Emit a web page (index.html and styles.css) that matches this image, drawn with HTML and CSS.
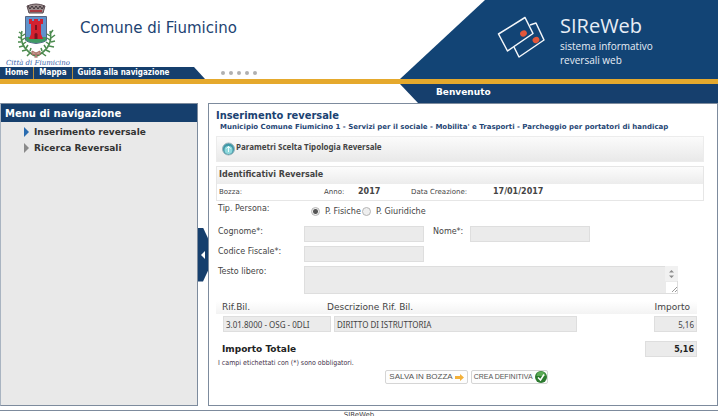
FILE: index.html
```html
<!DOCTYPE html>
<html lang="it">
<head>
<meta charset="utf-8">
<title>SIReWeb - Comune di Fiumicino</title>
<link rel="stylesheet" href="styles.css">
</head>
<body>
<div class="page">
  <header class="header">
    <div class="header-left">
      <div class="brand">
        <div class="crest">
          <svg width="48" height="56" viewBox="0 0 48 56" aria-hidden="true">
            <path d="M9 3Q18-1 27 3L25 10H11Z" fill="#9a8c8c" stroke="#5c4a50"/>
            <path d="M10 3l2 3 2-3 2 3 2-3 2 3 2-3 2 3 2-3" fill="none" stroke="#3c3338"/>
            <path d="M12 8h12" stroke="#a83a42" stroke-width="2"/>
            <path d="M7.500 13.500h21V37Q28 39 18 40.500Q8 39 7.500 37Z" fill="#5f92cc" stroke="#566581"/>
            <path d="M8 34h20v3q-1 2-10 3q-9-1-10-3z" fill="#3f9a63"/>
            <path d="M11 16h3v2h2v-2h4v2h2v-2h3v5h-2v10l2 5H11l2-5V21h-2z" fill="#d3202f"/>
            <path d="M16.500 36v-5q1.500-2 3 0v5zM17 22h2v5h-2z" fill="#7a1220"/>
            <g fill="none" stroke="#4b8a4e" stroke-width="1.500">
              <path d="M4 28Q0 44 17 53M32 28Q36 44 19 53"/>
              <path d="M4 31l-3-2M3 35l-3-1M3 39l-3 0M5 43l-4 1M8 47l-4 1M12 50l-3 3M4 33l3-2M4 37l3-2M5 41l3-2M8 45l2-3M12 48l1-3"/>
              <path d="M32 31l3-4M33 35l4-3M33 39l4-1M31 43l5 1M28 47l4 2M24 50l4 3M32 33l-3-2M32 37l-3-2M31 41l-3-2M28 45l-2-3M24 48l-1-3"/>
            </g>
            <path d="M14 48l4 2 4-2v4l-4-1-4 1zM18 51l-1 4M18 51l1 4" fill="#c79a8f" stroke="#a56a62"/>
          </svg>
          <span class="crest-name">Città di Fiumicino</span>
        </div>
        <div class="brand-title">Comune di Fiumicino</div>
      </div>
      <div class="nav-row">
        <nav class="nav">
          <a href="#home">Home</a>
          <a href="#mappa">Mappa</a>
          <a href="#guida">Guida alla navigazione</a>
        </nav>
        <div class="dots"><i></i><i></i><i></i><i></i><i></i></div>
      </div>
    </div>
    <div class="banner">
      <svg class="logo" width="50" height="43" viewBox="0 0 50 43" aria-hidden="true">
        <path d="M17 31l5 10 25-17-8-17-6 2" fill="none" stroke="#f4f7fa" stroke-width="1.500" stroke-linejoin="round"/>
        <path d="M1.500 18L28 1.500l8 16L10.500 35z" fill="#124475" stroke="#f4f7fa" stroke-width="1.500" stroke-linejoin="round"/>
        <ellipse cx="26.500" cy="17.500" rx="3.500" ry="3" transform="rotate(-35 26.500 17.500)" fill="#e2573a"/>
        <ellipse cx="39" cy="24" rx="3.500" ry="3" transform="rotate(-35 39 24)" fill="#e2573a"/>
      </svg>
      <div class="product">
        <div class="product-name">SIReWeb</div>
        <div class="product-line">sistema informativo</div>
        <div class="product-line">reversali web</div>
      </div>
    </div>
  </header>
  <div class="rule"></div>
  <div class="welcome">Benvenuto</div>

  <div class="columns">
    <aside class="sidebar">
      <h2>Menu di navigazione</h2>
      <ul>
        <li class="active"><a href="#inserimento">Inserimento reversale</a></li>
        <li><a href="#ricerca">Ricerca Reversali</a></li>
      </ul>
    </aside>
    <button class="toggle" type="button" aria-label="Chiudi menu"><i></i></button>
    <main class="main">
      <h1>Inserimento reversale</h1>
      <p class="subtitle">Municipio Comune Fiumicino 1 - Servizi per il sociale - Mobilita' e Trasporti - Parcheggio per portatori di handicap</p>

      <section class="params">
        <svg width="13" height="14" viewBox="0 0 13 14" aria-hidden="true">
          <circle cx="6.500" cy="7" r="6" fill="#3f98a8" stroke="#9bb4bb"/>
          <circle cx="6.500" cy="8" r="4" fill="#8fd8dc"/>
          <path d="M6.500 4v6M4.500 6.500l2-2 2 2" fill="none" stroke="#e9fbfb"/>
        </svg>
        <h2>Parametri Scelta Tipologia Reversale</h2>
      </section>

      <section class="ident">
        <h2>Identificativi Reversale</h2>
        <div class="ident-row">
          <span>Bozza:</span>
          <span>Anno:</span><b>2017</b>
          <span>Data Creazione:</span><b>17/01/2017</b>
        </div>
      </section>

      <form class="form">
        <div class="fields">
          <span class="label">Tip. Persona:</span>
          <div class="radios">
            <label><input type="radio" name="tipo" checked>P. Fisiche</label>
            <label><input type="radio" name="tipo">P. Giuridiche</label>
          </div>
          <label for="cognome">Cognome*:</label>
          <input id="cognome" type="text">
          <label class="second" for="nome">Nome*:</label>
          <input id="nome" type="text">
          <label class="start" for="cf">Codice Fiscale*:</label>
          <input id="cf" type="text">
          <label class="start" for="testo">Testo libero:</label>
          <div class="area">
            <textarea id="testo"></textarea>
            <svg class="area-bar" width="13" height="28" viewBox="0 0 13 28" aria-hidden="true">
              <path d="M0 0h13v15H0z" fill="#f1f1f1"/>
              <path d="M4 6.500L6.500 4 9 6.500zM4 9.500L6.500 12 9 9.500z" fill="#8b8b8b"/>
              <path d="M1 16h11v11H1z" fill="#fff"/>
              <path d="M7 26l5-5M10 26l2-2" stroke="#999"/>
            </svg>
          </div>
        </div>

        <table class="items">
          <colgroup><col class="c1"><col class="c2"><col><col class="c4"></colgroup>
          <thead>
            <tr><th>Rif.Bil.</th><th colspan="2">Descrizione Rif. Bil.</th><th class="num">Importo</th></tr>
          </thead>
          <tbody>
            <tr>
              <td class="ref" colspan="2"><input type="text" aria-label="Rif.Bil." value="3.01.8000 - OSG - 0DLI" readonly></td>
              <td class="desc"><input type="text" aria-label="Descrizione Rif. Bil." value="DIRITTO DI ISTRUTTORIA" readonly></td>
              <td class="num amount"><input type="text" aria-label="Importo" value="5,16" readonly></td>
            </tr>
          </tbody>
        </table>

        <div class="total">
          <label for="totale">Importo Totale</label>
          <input id="totale" type="text" value="5,16" readonly>
        </div>
        <p class="note">I campi etichettati con (*) sono obbligatori.</p>
        <div class="actions">
          <button class="save" type="button">SALVA IN BOZZA
            <svg width="9" height="7" viewBox="0 0 9 7" aria-hidden="true"><path d="M0 2h5V0l4 3.500L5 7V5H0z" fill="#f3b13b"/></svg>
          </button>
          <button class="create" type="button">CREA DEFINITIVA
            <svg width="12" height="12" viewBox="0 0 12 12" aria-hidden="true"><circle cx="6" cy="6" r="6" fill="#2c7a2f"/><path d="M1.500 5a4.500 4.500 0 0 1 9 0z" fill="#5bab55"/><path d="M3 6.500l2.500 2.500L9 3.500" fill="none" stroke="#fff" stroke-width="1.500"/></svg>
          </button>
        </div>
      </form>
    </main>
  </div>
  <footer class="footer">SIReWeb</footer>
</div>
</body>
</html>
```
FILE: styles.css
```css
* { box-sizing: border-box; }

html { height: 100%; overflow: hidden; }

body {
  margin: 0;
  background: #fff;
  color: #444;
  font: 8px/12px "DejaVu Sans", Verdana, sans-serif;
}

h1, h2, p, ul { margin: 0; padding: 0; }
ul { list-style: none; }
a { color: inherit; text-decoration: none; }
input, textarea, button { font: inherit; color: inherit; margin: 0; }

.page { margin-right: 2px; }

/* Header */
.header { display: flex; justify-content: space-between; }
.header-left { display: flex; flex-direction: column; flex: 1; }
.brand { display: flex; flex: 1; }

.crest {
  display: flex;
  flex-direction: column;
  width: 80px;
  padding: 3px 0 0 6px;
}
.crest svg { margin-left: 12px; }
.crest-name {
  color: #3a63a8;
  font: italic 7px/8px "DejaVu Serif", serif;
  white-space: nowrap;
}
.brand-title { padding-top: 18px; color: #1d4372; font-size: 15px; line-height: 20px; }

.nav-row { display: flex; gap: 16px; }
.nav {
  display: flex;
  width: 205px;
  background: #163f6d;
  color: #fff;
  font: bold 8px/12px "DejaVu Sans Condensed", "DejaVu Sans", sans-serif;
  clip-path: polygon(0 0, 194px 0, 100% 100%, 0 100%);
}
.nav a { padding: 0 5px; }
.nav a + a { border-left: 1px solid #b58d3c; }
.dots { display: flex; align-items: center; gap: 4px; }
.dots i { width: 4px; height: 4px; border-radius: 50%; background: #b0b0b0; }

.banner {
  display: flex;
  width: 318px;
  height: 79px;
  padding: 13px 0 0 97px;
  background: #124475;
  color: #e8eef5;
  font-family: "Open Sans", "Noto Sans", sans-serif;
  clip-path: polygon(85px 0, 100% 0, 100% 100%, 0 100%);
}
.logo { margin-top: 3px; }
.product { padding-left: 13px; }
.product-name { font-size: 20px; line-height: 26px; }
.product-line { font-size: 10px; line-height: 14px; }

.rule { height: 5px; background: #e5a92d; }
.welcome {
  width: 318px;
  height: 19px;
  margin-left: auto;
  padding: 2px 0 0 36px;
  background: #163f6d;
  color: #fff;
  font: bold 9px/12px "DejaVu Sans", sans-serif;
  clip-path: polygon(0 0, 100% 0, 100% 100%, 18px 100%);
}

/* Body columns */
.columns { display: grid; grid-template-columns: 198px 10px 1fr; }

.sidebar { border: 1px solid #7d8b9d; border-left-color: #a9b4c1; background: #e9e9e9; color: #333; }
.sidebar h2 {
  padding: 2px 4px 0;
  background: #163f6d;
  color: #fff;
  font-size: 10px;
  line-height: 16px;
}
.sidebar ul { padding-top: 2px; }
.sidebar li {
  display: flex;
  align-items: center;
  gap: 5px;
  padding-left: 23px;
  font: bold 9px/16px "DejaVu Sans", sans-serif;
}
.sidebar li::before {
  content: "";
  border: solid transparent;
  border-width: 5px 0 5px 5px;
  border-left-color: #8a8a8a;
}
.sidebar .active::before { border-left-color: #2a6cb0; }

.toggle {
  align-self: center;
  height: 54px;
  padding: 0 0 0 3px;
  border: 0;
  background: #163f6d;
  clip-path: polygon(0 0, 50% 0, 100% 20%, 100% 80%, 50% 100%, 0 100%);
}
.toggle i {
  display: block;
  width: 0;
  border: solid transparent;
  border-width: 4px 4px 4px 0;
  border-right-color: #fff;
}

.main { padding: 6px 13px 21px 7px; border: 1px solid #7d8b9d; }
.main h1 {
  color: #1a4272;
  font: bold 11px/12px "DejaVu Sans Condensed", "DejaVu Sans", sans-serif;
}
.subtitle { padding-left: 4px; color: #1f4675; font-size: 7px; font-weight: bold; line-height: 10px; }

.params {
  display: flex;
  gap: 1px;
  margin-top: 4px;
  padding: 5px;
  border: 1px solid #ececec;
  background: linear-gradient(#fbfbfb, #e9e9e9);
}
.params h2 { font: bold 8px/10px "Noto Sans", sans-serif; }

.ident { margin-top: 4px; border: 1px solid #e6e6e6; }
.ident h2 {
  padding: 0 2px 2px;
  background: linear-gradient(#fcfcfc, #ececec);
  font-size: 8px;
  line-height: 15px;
}
.ident-row {
  display: grid;
  grid-template-columns: 105px 34px 53px 82px 1fr;
  padding: 0 2px;
  font-size: 7px;
  line-height: 16px;
}
.ident-row b { font-size: 8px; }

/* Form */
.fields {
  display: grid;
  grid-template-columns: 88px 120px 46px 120px 1fr;
  row-gap: 4px;
  padding-top: 2px;
}
.fields > label, .label { padding-left: 2px; }
.fields > .second { padding-left: 9px; }
.fields > .start { grid-column-start: 1; }
.radios { display: flex; grid-column: 2 / -1; gap: 1px; padding: 2px 0 5px 7px; }
.radios label {
  display: flex;
  align-items: center;
  gap: 5px;
  font: 9px/12px "DejaVu Sans Condensed", "DejaVu Sans", sans-serif;
}
.radios input {
  appearance: none;
  width: 9px;
  height: 9px;
  border: 1px solid #b5b5b5;
  border-radius: 50%;
  background: #efefef;
}
.radios input:checked { background: radial-gradient(#555 2px, #efefef 3px); }

input[type="text"], textarea {
  width: 100%;
  height: 16px;
  padding: 0 2px;
  border: 1px solid #dedede;
  border-radius: 0;
  background: #ebebeb;
}
.area { position: relative; grid-column: 2 / -1; margin-right: 26px; }
.area textarea { display: block; height: 28px; resize: none; overflow: hidden; }
.area-bar { position: absolute; top: 0; right: 0; }

.items {
  width: calc(100% - 7px);
  margin-top: 7px;
  border-collapse: collapse;
  table-layout: fixed;
}
.items .c1 { width: 111px; }
.items .c2 { width: 7px; }
.items .c4 { width: 60px; }
.items th {
  padding: 0;
  font-size: 9px;
  font-weight: normal;
  line-height: 13px;
  text-align: left;
}
.items thead { background: linear-gradient(#fff, #f3f3f3); }
.items th:first-child { padding-left: 6px; }
.items .num { text-align: right; }
.items th.num { padding-right: 7px; }
.items td { padding: 2px 0 0; }
.items td input { font: 8px/12px "Noto Sans", sans-serif; }
.items .ref { padding-left: 7px; padding-right: 3px; }
.items .desc input { width: 243px; }
.items .amount input { width: 43px; text-align: right; }

.total {
  display: flex;
  align-items: center;
  justify-content: space-between;
  margin: 9px 7px 0 6px;
  color: #222;
  font-size: 9px;
  font-weight: bold;
}
.total input { width: 52px; font-size: 8px; text-align: right; }
.note {
  padding-left: 2px;
  color: #43304a;
  font: 7px/12px "DejaVu Sans Condensed", "DejaVu Sans", sans-serif;
}
.actions { display: flex; justify-content: center; gap: 3px; padding: 1px 0 0 13px; }
.actions button {
  display: flex;
  align-items: center;
  gap: 2px;
  height: 14px;
  padding: 0 3px;
  border: 1px solid #d5d5d5;
  border-radius: 2px;
  background: #fdfdfd;
  color: #555;
  font-family: "Liberation Sans", Arial, sans-serif;
}
.actions .save { font-size: 8px; }
.actions .create { padding: 0 0 0 2px; font-size: 7px; }

.footer {
  margin-top: 4px;
  border-top: 1px solid #7d8b9d;
  font-size: 7px;
  line-height: 8px;
  text-align: center;
}
```
